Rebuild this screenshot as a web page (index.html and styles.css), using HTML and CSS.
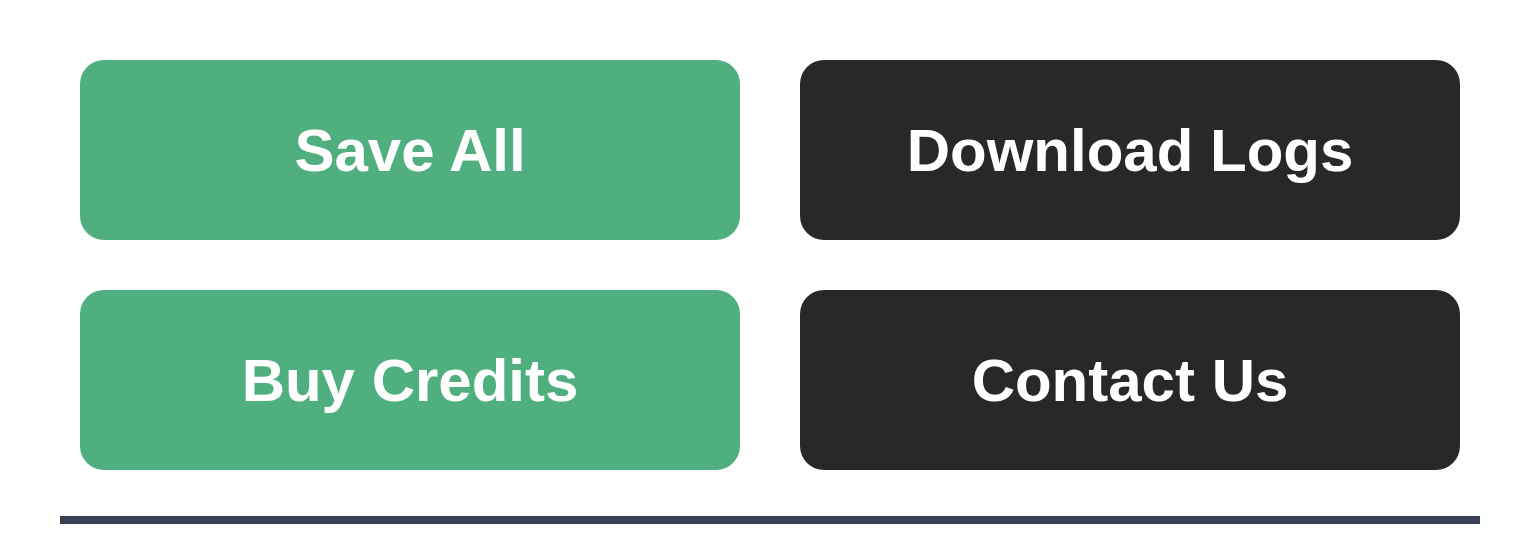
FILE: index.html
```html
<!DOCTYPE html>
<html>
<head>
<meta charset="utf-8">
<link rel="stylesheet" href="styles.css">
</head>
<body>
<div class="page">
  <div class="grid">
    <button class="btn btn-green">Save All</button>
    <button class="btn btn-dark">Download Logs</button>
    <button class="btn btn-green">Buy Credits</button>
    <button class="btn btn-dark">Contact Us</button>
  </div>
  <div class="bar"></div>
</div>
</body>
</html>
```
FILE: styles.css
```css
html, body {
  margin: 0;
  padding: 0;
  background: #ffffff;
}
.page {
  padding: 60px 60px 0 60px;
  font-family: "Liberation Sans", Arial, sans-serif;
}
.grid {
  display: grid;
  grid-template-columns: 1fr 1fr;
  gap: 50px 60px;
  padding: 0 20px;
}
.btn {
  height: 180px;
  border: none;
  border-radius: 24px;
  color: #ffffff;
  font-family: "Liberation Sans", Arial, sans-serif;
  font-weight: bold;
  font-size: 60px;
  display: flex;
  align-items: center;
  justify-content: center;
  padding: 0;
}
.btn-green {
  background: #4faf7f;
}
.btn-dark {
  background: #282828;
}
.bar {
  margin-top: 46px;
  height: 8px;
  background: #374151;
}
```
